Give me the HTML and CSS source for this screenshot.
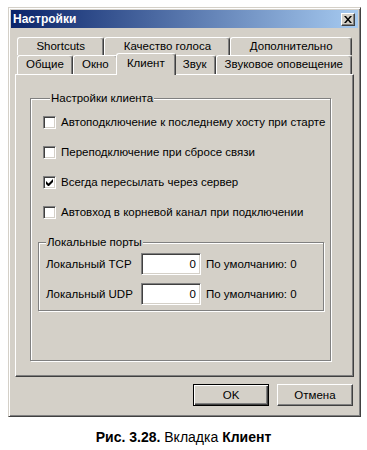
FILE: index.html
```html
<!DOCTYPE html>
<html lang="ru">
<head>
    <meta charset="UTF-8">
    <title>Настройки</title>
    <link rel="stylesheet" href="styles.css">
</head>
<body>
    <div class="window">
        <div class="titlebar">
            <span class="title">Настройки</span>
            <span class="close">
                <svg width="8" height="7" viewBox="0 0 8 7"><path d="M0 0h2l2 2.5L6 0h2L5 3.5 8 7H6L4 4.5 2 7H0l3-3.5z" fill="#000"/></svg>
            </span>
        </div>
        <div class="body">
            <div class="tabs">
                <div class="tab-row">
                    <div class="tab">Shortcuts</div>
                    <div class="tab">Качество голоса</div>
                    <div class="tab">Дополнительно</div>
                </div>
                <div class="tab-row front">
                    <div class="tab">Общие</div>
                    <div class="tab">Окно</div>
                    <div class="tab active">Клиент</div>
                    <div class="tab">Звук</div>
                    <div class="tab">Звуковое оповещение</div>
                </div>
            </div>
            <div class="panel">
                <fieldset class="group client">
                    <legend>Настройки клиента</legend>
                    <div class="check"><span class="box"></span>Автоподключение к последнему хосту при старте</div>
                    <div class="check"><span class="box"></span>Переподключение при сбросе связи</div>
                    <div class="check"><span class="box"><svg width="7" height="7" viewBox="0 0 7 7"><path d="M0 2v3l2 2h1l4-4V0L2.5 4.5z" fill="#000"/></svg></span>Всегда пересылать через сервер</div>
                    <div class="check"><span class="box"></span>Автовход в корневой канал при подключении</div>
                    <fieldset class="group ports">
                        <legend>Локальные порты</legend>
                        <div class="port-row">
                            <span class="port-label">Локальный TCP</span>
                            <span class="field">0</span>
                            <span>По умолчанию: 0</span>
                        </div>
                        <div class="port-row">
                            <span class="port-label">Локальный UDP</span>
                            <span class="field">0</span>
                            <span>По умолчанию: 0</span>
                        </div>
                    </fieldset>
                </fieldset>
            </div>
            <div class="buttons">
                <button class="btn default">OK</button>
                <button class="btn">Отмена</button>
            </div>
        </div>
    </div>
    <p class="caption"><b>Рис. 3.28.</b> Вкладка <b>Клиент</b></p>
</body>
</html>
```

FILE: styles.css
```css
body {
    margin: 0;
    background: #fff;
    font-family: "Liberation Sans", Arial, sans-serif;
    font-size: 11.5px;
    color: #000;
}
.window {
    margin: 7px 0 0 8px;
    width: 353px;
    height: 410px;
    box-sizing: border-box;
    padding: 2px;
    background: #d4d0c8;
    border: 1px solid;
    border-color: #d4d0c8 #404040 #404040 #d4d0c8;
    box-shadow: inset 1px 1px #fff, inset -1px -1px #808080;
    white-space: nowrap;
}
.titlebar {
    height: 18px;
    display: flex;
    align-items: center;
    justify-content: space-between;
    padding: 0 3px 0 2px;
    background: linear-gradient(to right, #0a246a, #a6caf0);
}
.title {
    color: #fff;
    font-weight: bold;
    font-size: 12px;
}
.close {
    width: 14px;
    height: 13px;
    box-sizing: border-box;
    display: flex;
    align-items: center;
    justify-content: center;
    background: #d4d0c8;
    border: 1px solid;
    border-color: #fff #404040 #404040 #fff;
    box-shadow: inset -1px -1px #808080;
}
.body {
    padding: 0 4px;
}
.tabs {
    margin-top: 9px;
    padding: 0 2px;
}
.tab-row {
    display: flex;
    height: 18px;
}
.tab-row.front {
    height: 19px;
}
.tab {
    flex: 1 1 auto;
    text-align: center;
    line-height: 17px;
    padding: 0 5px;
    border-top: 1px solid #fff;
    border-left: 1px solid #fff;
    border-right: 1px solid #404040;
    box-shadow: inset -1px 0 #808080;
    border-radius: 3px 3px 0 0;
    background: #d4d0c8;
}
.tab.active {
    position: relative;
    z-index: 1;
    margin: -2px -2px -1px;
    padding: 0 7px 3px;
    line-height: 18px;
}
.panel {
    height: 303px;
    box-sizing: border-box;
    border: 1px solid;
    border-color: #fff #404040 #404040 #fff;
    box-shadow: inset -1px -1px #808080;
}
.group {
    margin: 0;
    border: 1px solid #808080;
    box-shadow: inset 1px 1px #fff, 1px 1px #fff;
    min-width: 0;
}
.group legend {
    padding: 0 1px;
    line-height: 14px;
    background: #d4d0c8;
}
.client {
    margin: 16px 0 0 14px;
    width: 301px;
    box-sizing: border-box;
    padding: 2px 0 49px 12px;
}
.client legend {
    margin-left: 7px;
}
.check {
    height: 30px;
    display: flex;
    align-items: center;
}
.box {
    flex: none;
    width: 13px;
    height: 13px;
    box-sizing: border-box;
    margin-right: 5px;
    display: flex;
    align-items: center;
    justify-content: center;
    background: #fff;
    border: 1px solid;
    border-color: #808080 #fff #fff #808080;
    box-shadow: inset 1px 1px #404040, inset -1px -1px #d4d0c8;
}
.ports {
    margin: 8px 0 0 -5px;
    width: 286px;
    box-sizing: border-box;
    padding: 0 0 1px 7px;
}
.ports legend {
    margin-left: 0;
}
.port-row {
    height: 30px;
    display: flex;
    align-items: center;
}
.port-label {
    width: 95px;
}
.field {
    width: 60px;
    height: 22px;
    box-sizing: border-box;
    margin-right: 5px;
    padding-right: 4px;
    text-align: right;
    line-height: 20px;
    background: #fff;
    border: 1px solid;
    border-color: #808080 #fff #fff #808080;
    box-shadow: inset 1px 1px #404040, inset -1px -1px #d4d0c8;
}
.buttons {
    display: flex;
    justify-content: flex-end;
    gap: 8px;
    margin-top: 7px;
    padding-right: 1px;
}
.btn {
    width: 76px;
    height: 22px;
    padding: 0;
    font: inherit;
    background: #d4d0c8;
    border: 1px solid;
    border-color: #fff #404040 #404040 #fff;
    box-shadow: inset -1px -1px #808080;
}
.btn.default {
    border-color: #000;
    box-shadow: inset 1px 1px #fff, inset -1px -1px #404040, inset -2px -2px #808080;
}
.caption {
    margin: 12px 0 0;
    text-align: center;
    font-size: 14px;
    line-height: 16px;
}
```
